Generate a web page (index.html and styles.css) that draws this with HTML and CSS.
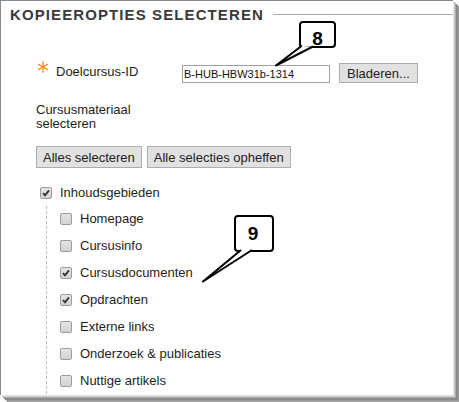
FILE: index.html
```html
<!DOCTYPE html>
<html>
<head>
<meta charset="utf-8">
<link rel="stylesheet" href="styles.css">
</head>
<body>
<div class="panel">
  <div class="legend">
    <span class="legend-title">KOPIEEROPTIES SELECTEREN</span>
    <span class="legend-rule"></span>
  </div>

  <div class="field-row first">
    <div class="label">
      <svg class="req" width="12" height="12" viewBox="0 0 12 12">
        <g stroke="#f7931e" stroke-width="1.4" stroke-linecap="round">
          <line x1="6" y1="0.8" x2="6" y2="11.2"/>
          <line x1="1.5" y1="3.4" x2="10.5" y2="8.6"/>
          <line x1="1.5" y1="8.6" x2="10.5" y2="3.4"/>
        </g>
      </svg>Doelcursus-ID
    </div>
    <input class="text-input" type="text" value="B-HUB-HBW31b-1314">
    <button class="btn browse">Bladeren...</button>
  </div>

  <div class="field-row second">
    <div class="label wrap">Cursusmateriaal selecteren</div>
  </div>

  <div class="btn-row">
    <button class="btn">Alles selecteren</button>
    <button class="btn">Alle selecties opheffen</button>
  </div>

  <div class="tree">
    <div class="item">
      <span class="cb checked"><svg width="10" height="10" viewBox="0 0 10 10"><path d="M2 5.2 L4 7.4 L8 2.4" fill="none" stroke="#333" stroke-width="1.8"/></svg></span>
      <span>Inhoudsgebieden</span>
    </div>
    <div class="children">
      <div class="item"><span class="cb"></span><span>Homepage</span></div>
      <div class="item"><span class="cb"></span><span>Cursusinfo</span></div>
      <div class="item"><span class="cb checked"><svg width="10" height="10" viewBox="0 0 10 10"><path d="M2 5.2 L4 7.4 L8 2.4" fill="none" stroke="#333" stroke-width="1.8"/></svg></span><span>Cursusdocumenten</span></div>
      <div class="item"><span class="cb checked"><svg width="10" height="10" viewBox="0 0 10 10"><path d="M2 5.2 L4 7.4 L8 2.4" fill="none" stroke="#333" stroke-width="1.8"/></svg></span><span>Opdrachten</span></div>
      <div class="item"><span class="cb"></span><span>Externe links</span></div>
      <div class="item"><span class="cb"></span><span>Onderzoek &amp; publicaties</span></div>
      <div class="item"><span class="cb"></span><span>Nuttige artikels</span></div>
    </div>
  </div>

  <svg class="callouts" width="453" height="395" viewBox="0 0 453 395">
    <g fill="#fff" stroke="#000" stroke-width="2" stroke-linejoin="round">
      <rect x="300" y="22" width="35" height="25" rx="3" ry="3"/>
      <path d="M301.5 46 L276 65.5 L313 46.5"/>
      <rect x="235" y="216" width="38" height="35" rx="3" ry="3"/>
      <path d="M241 250 L203 281.5 L252 250"/>
    </g>
    <text x="317.5" y="44.5" class="num" text-anchor="middle">8</text>
    <text x="253" y="239.5" class="num" text-anchor="middle">9</text>
  </svg>
</div>
</body>
</html>
```

FILE: styles.css
```css
html, body {
  margin: 0;
  padding: 0;
  background: #fff;
}

body {
  font-family: "Liberation Sans", Arial, sans-serif;
  font-size: 13px;
  color: #222;
  width: 459px;
  height: 402px;
  overflow: hidden;
}

.panel {
  position: relative;
  width: 453px;
  height: 395px;
  box-sizing: border-box;
  border-left: 1px solid #8a8a8a;
  border-top: 1px solid #8a8a8a;
  background: #fff;
  overflow: hidden;
  box-shadow:
    1px 1px 0 #e2e2e2,
    2px 2px 0 #cfcfcf,
    3px 3px 0 #a9a9a9,
    4px 4px 0 #8c8c8c,
    5px 5px 0 #8a8a8a,
    6px 6px 0 #9a9a9a,
    7px 7px 0 #a6a6a6;
}

.legend {
  display: flex;
  align-items: center;
  padding: 5px 0 0 9px;
  height: 18px;
}

.legend-title {
  font-size: 15px;
  font-weight: bold;
  letter-spacing: 1.1px;
  color: #3a3a3a;
  line-height: 18px;
  white-space: nowrap;
}

.legend-rule {
  flex: 1;
  height: 1px;
  background: #a8a8a8;
  margin-left: 9px;
  margin-top: -2px;
}

.field-row {
  display: flex;
  align-items: flex-start;
  padding-left: 35px;
}

.field-row.first {
  margin-top: 37px;
}

.field-row.second {
  margin-top: 20px;
}

.label {
  width: 146px;
  flex: none;
  line-height: 16px;
  color: #1e1e1e;
}

.label.wrap {
  line-height: 14px;
}

.req {
  vertical-align: 3px;
  margin-left: 1px;
  margin-right: 7px;
}

.text-input {
  width: 148px;
  height: 18px;
  box-sizing: border-box;
  border: 1px solid #a0a0a0;
  margin: 4px 0 0 0;
  padding: 0 1px;
  font-family: "Liberation Sans", Arial, sans-serif;
  font-size: 11px;
  color: #111;
  outline: none;
}

.btn {
  height: 22px;
  box-sizing: border-box;
  border: 1px solid #adadad;
  background: #e1e1e1;
  border-radius: 0;
  font-family: "Liberation Sans", Arial, sans-serif;
  font-size: 13px;
  color: #222;
  padding: 0 6px;
  margin: 0;
}

.btn.browse {
  height: 20px;
  margin: 2px 0 0 9px;
  padding: 0 7px;
}

.btn-row {
  display: flex;
  gap: 5px;
  padding-left: 35px;
  margin-top: 15px;
}

.tree {
  padding-left: 39px;
  margin-top: 17px;
}

.item {
  display: flex;
  align-items: center;
  height: 16px;
  gap: 8px;
  line-height: 16px;
  color: #1e1e1e;
}

.cb {
  width: 12px;
  height: 12px;
  box-sizing: border-box;
  border: 1px solid #9c9c9c;
  border-radius: 2px;
  background: linear-gradient(#e4e4e4, #d2d2d2);
  display: flex;
  align-items: center;
  justify-content: center;
  flex: none;
}

.children {
  margin-left: 6px;
  margin-top: 5px;
  padding-top: 5px;
  padding-left: 13px;
  padding-bottom: 40px;
  border-left: 1px dashed #bdbdbd;
}

.children .item + .item {
  margin-top: 11px;
}

.callouts {
  position: absolute;
  left: -1px;
  top: -1px;
}

.num {
  font-family: "Liberation Sans", Arial, sans-serif;
  font-size: 19px;
  font-weight: bold;
  fill: #000;
}
```
